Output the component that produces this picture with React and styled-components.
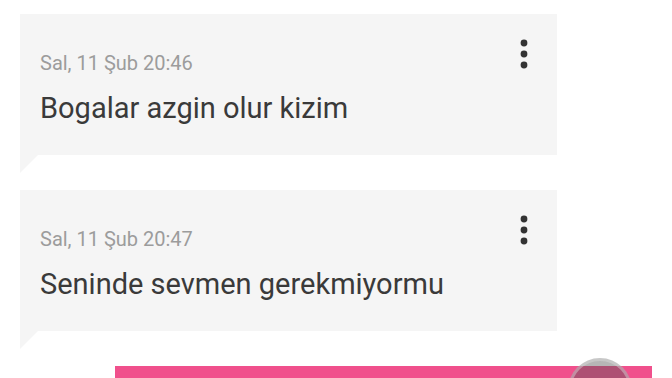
import styled, { createGlobalStyle } from "styled-components";

const GlobalStyle = createGlobalStyle`
html, body {
  margin: 0;
  padding: 0;
  background: #ffffff;
  font-family: Roboto, "Noto Sans", sans-serif;
  overflow: hidden;
}
`;

const Screen = styled.div`
width: 672px;
height: 378px;
position: relative;
overflow: hidden;
display: flex;
flex-direction: column;
padding: 14px 0 0 20px;
box-sizing: border-box;
gap: 35px;
`;

const Bubble = styled.div`
position: relative;
width: 537px;
height: 141px;
box-sizing: border-box;
background: #f5f5f5;
padding: 38px 29px 0 20px;

&::after {
  content: "";
  position: absolute;
  left: 0;
  top: 100%;
  width: 18px;
  height: 18px;
  background: #f5f5f5;
  clip-path: polygon(0 0, 100% 0, 0 100%);
}
`;

const Header = styled.div`
display: flex;
justify-content: space-between;
align-items: flex-start;
height: 22px;
`;

const Stamp = styled.span`
font-size: 20px;
line-height: 22px;
color: #9c9c9c;
`;

const Menu = styled.svg`
margin-top: -13px;
`;

const Message = styled.div`
margin-top: 18px;
font-size: 29px;
line-height: 32px;
color: #3a3a3a;
`;

const BottomBar = styled.div`
position: absolute;
left: 115px;
top: 366px;
width: 537px;
height: 20px;
background: #f0508c;
`;

const Fab = styled.div`
position: absolute;
left: 568px;
top: 358px;
width: 64px;
height: 64px;
border-radius: 50%;
box-sizing: border-box;
border: 3px solid rgba(220, 220, 220, 0.45);
background: rgba(80, 80, 80, 0.42);
`;

const MoreIcon = () => (
  <Menu width="8" height="30" viewBox="0 0 8 30">
    <circle cx="4" cy="4" r="3.4" fill="#333" />
    <circle cx="4" cy="15" r="3.4" fill="#333" />
    <circle cx="4" cy="26" r="3.4" fill="#333" />
  </Menu>
);

const messages = [
  { time: "Sal, 11 Şub 20:46", text: "Bogalar azgin olur kizim" },
  { time: "Sal, 11 Şub 20:47", text: "Seninde sevmen gerekmiyormu" },
];

const App = () => {
  return (
    <Screen>
      <GlobalStyle />
      {messages.map((m) => (
        <Bubble key={m.time}>
          <Header>
            <Stamp>{m.time}</Stamp>
            <MoreIcon />
          </Header>
          <Message>{m.text}</Message>
        </Bubble>
      ))}
      <BottomBar />
      <Fab />
    </Screen>
  );
};

export default App;
